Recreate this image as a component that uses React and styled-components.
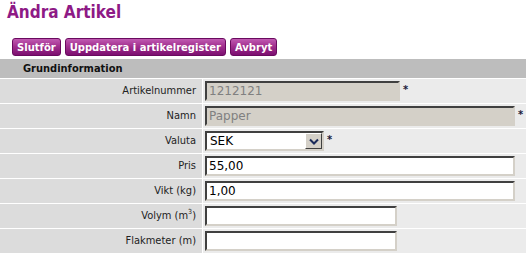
import styled, { createGlobalStyle } from "styled-components";

const colors = {
  purple: "#8e1a86",
  buttonTop: "#c05ab2",
  buttonBottom: "#7c0f70",
  header: "#bdbdbd",
  label: "#dcdcdc",
  value: "#ebebeb",
  disabled: "#d4d0c8",
  text: "#222222",
};

const uiFont = `Tahoma, "DejaVu Sans Condensed", "DejaVu Sans", sans-serif`;
const inputFont = `Verdana, "DejaVu Sans", sans-serif`;

const GlobalStyle = createGlobalStyle`
  body {
    margin: 0;
    background: #ffffff;
    font-family: ${uiFont};
  }
`;

const Page = styled.div`
  width: 526px;
`;

const Title = styled.h1`
  margin: 0;
  padding: 1px 0 0 7px;
  height: 36px;
  box-sizing: border-box;
  font-family: ${uiFont};
  font-size: 17px;
  font-weight: bold;
  color: ${colors.purple};
  line-height: 22px;
`;

const Toolbar = styled.div`
  display: flex;
  gap: 4px;
  padding: 2px 0 0 12px;
  height: 23px;
  box-sizing: border-box;
`;

const Button = styled.button`
  height: 18px;
  padding: 0 4px;
  border: 1px solid #6a0a5f;
  border-radius: 3px;
  background: linear-gradient(${colors.buttonTop}, #a2308f 45%, ${colors.buttonBottom});
  color: #ffffff;
  font-family: ${inputFont};
  font-size: 10px;
  font-weight: bold;
  line-height: 15px;
  cursor: pointer;
`;

const Form = styled.div`
  display: grid;
  grid-template-columns: 202px 1fr;
  grid-template-rows: 19px;
  grid-auto-rows: 24px;
  gap: 1px;
  background: #ffffff;
`;

const SectionHeader = styled.div`
  grid-column: 1 / -1;
  background: ${colors.header};
  padding-left: 23px;
  font-size: 11px;
  font-weight: bold;
  line-height: 19px;
  color: #111111;
`;

const Label = styled.div`
  background: ${colors.label};
  text-align: right;
  padding-right: 6px;
  font-size: 11px;
  line-height: 24px;
  color: ${colors.text};

  sup {
    font-size: 7px;
    line-height: 0;
  }
`;

const Value = styled.div`
  display: flex;
  align-items: center;
  gap: 3px;
  background: ${colors.value};
  padding-left: 2px;
`;

const Input = styled.input`
  box-sizing: border-box;
  width: ${({ $w }) => $w}px;
  height: 20px;
  margin: 0;
  padding: 0 2px;
  border: 2px solid;
  border-color: #404040 #d4d0c8 #d4d0c8 #404040;
  background: ${({ disabled }) => (disabled ? colors.disabled : "#ffffff")};
  color: ${({ disabled }) => (disabled ? "#808080" : "#000000")};
  font-family: ${inputFont};
  font-size: 12px;
  outline: none;
`;

const Star = styled.span`
  align-self: flex-start;
  margin-top: 5px;
  font-size: 11px;
  font-weight: bold;
  color: #1a1a3a;
  line-height: 11px;
`;

const SelectBox = styled.div`
  box-sizing: border-box;
  display: flex;
  width: 119px;
  height: 20px;
  border: 2px solid;
  border-color: #404040 #d4d0c8 #d4d0c8 #404040;
  background: #ffffff;
`;

const SelectText = styled.span`
  flex: 1;
  padding-left: 3px;
  font-family: ${inputFont};
  font-size: 12px;
  line-height: 16px;
  color: #000000;
`;

const SelectArrow = styled.span`
  width: 17px;
  display: flex;
  align-items: center;
  justify-content: center;
  background: ${colors.disabled};
  border: 1px solid;
  border-color: #ffffff #404040 #404040 #ffffff;
  box-sizing: border-box;
`;

const fields = [
  { label: "Artikelnummer", value: "1212121", width: 195, disabled: true, required: true },
  { label: "Namn", value: "Papper", width: 310, disabled: true, required: true },
  { label: "Valuta", select: "SEK", required: true },
  { label: "Pris", value: "55,00", width: 310 },
  { label: "Vikt (kg)", value: "1,00", width: 310 },
  { label: <>Volym (m<sup>3</sup>)</>, value: "", width: 192 },
  { label: "Flakmeter (m)", value: "", width: 192 },
];

const App = () => {
  return (
    <Page>
      <GlobalStyle />
      <Title>Ändra Artikel</Title>

      <Toolbar>
        <Button>Slutför</Button>
        <Button>Uppdatera i artikelregister</Button>
        <Button>Avbryt</Button>
      </Toolbar>

      <Form>
        <SectionHeader>Grundinformation</SectionHeader>
        {fields.map((field, i) => [
          <Label key={"l" + i}>{field.label}</Label>,
          <Value key={"v" + i}>
            {field.select ? (
              <SelectBox>
                <SelectText>{field.select}</SelectText>
                <SelectArrow>
                  <svg width="10" height="7" viewBox="0 0 10 7">
                    <path d="M1 1.5 L5 5.5 L9 1.5" fill="none" stroke="#1a2a5a" strokeWidth="2" />
                  </svg>
                </SelectArrow>
              </SelectBox>
            ) : (
              <Input
                $w={field.width}
                defaultValue={field.value}
                disabled={field.disabled}
              />
            )}
            {field.required && <Star>*</Star>}
          </Value>,
        ])}
      </Form>
    </Page>
  );
};

export default App;
